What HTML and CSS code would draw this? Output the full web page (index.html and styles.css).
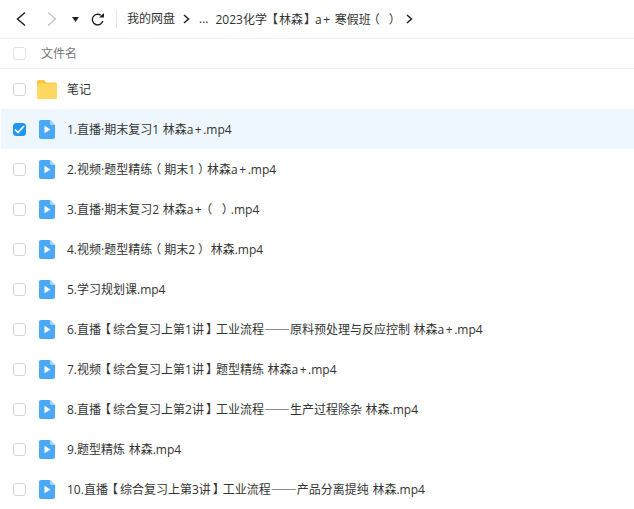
FILE: index.html
```html
<!DOCTYPE html>
<html lang="zh">
<head>
<meta charset="utf-8">
<title>文件</title>
<link rel="stylesheet" href="styles.css">
</head>
<body>
<div class="page">
  <div class="toolbar">
    <svg class="nav back" width="10" height="16" viewBox="0 0 10 16"><path d="M9 1.500 1.500 8 9 14.500" fill="none" stroke="#222" stroke-width="1.500"/></svg>
    <svg class="nav fwd" width="10" height="16" viewBox="0 0 10 16"><path d="M1 1.500 8.500 8 1 14.500" fill="none" stroke="#c4c4c4" stroke-width="1.300"/></svg>
    <svg class="nav drop" width="7" height="5" viewBox="0 0 7 5"><path d="M0 0h7L3.500 5z" fill="#222"/></svg>
    <svg class="nav reload" width="13" height="13" viewBox="0 0 13 13"><path d="M11.800 8A5.300 5.300 0 1 1 9.800 2.300" fill="none" stroke="#222" stroke-width="1.400"/><path d="M8 4.500h5V0z" fill="#222"/></svg>
    <span class="divider"></span>
    <span class="crumb">我的网盘</span>
    <svg class="sep" width="7" height="10" viewBox="0 0 7 10"><path d="M1 1l4.500 4L1 9" fill="none" stroke="#222" stroke-width="1.500"/></svg>
    <span class="crumb dots">...</span>
    <span class="crumb">2023化学<span class="ob">【</span>林森<span class="cb">】</span>a<span class="plus">+</span> 寒假班<span class="ol">（</span> <span class="cl">）</span></span>
    <svg class="sep last" width="7" height="10" viewBox="0 0 7 10"><path d="M1 1l4.500 4L1 9" fill="none" stroke="#222" stroke-width="1.500"/></svg>
  </div>
  <div class="row head">
    <span class="check soft"></span>
    <span class="head-name">文件名</span>
  </div>
  <div class="row folder">
    <span class="check"></span>
    <svg class="icon" width="20" height="19" viewBox="0 0 20 19"><path d="M0 2a2 2 0 0 1 2-2h5l2.500 2.500H18a2 2 0 0 1 2 2V17a2 2 0 0 1-2 2H2a2 2 0 0 1-2-2z" fill="#fdc33c"/><path d="M0 5a1.500 1.500 0 0 1 1.500-1.500h17A1.500 1.500 0 0 1 20 5v12a2 2 0 0 1-2 2H2a2 2 0 0 1-2-2z" fill="#ffd95f"/></svg>
    <span class="name">笔记</span>
  </div>
  <div class="row file selected">
    <span class="check on"><svg width="11" height="9" viewBox="0 0 11 9"><path d="M1 4.500l3 3L10 1" fill="none" stroke="#fff" stroke-width="1.700"/></svg></span>
    <svg class="icon" width="16" height="19" viewBox="0 0 16 19"><path class="v-bg" d="M2 0h9l5 5v12a2 2 0 0 1-2 2H2a2 2 0 0 1-2-2V2a2 2 0 0 1 2-2z"/><path class="v-fold" d="M11 0l5 5h-3.500A1.500 1.500 0 0 1 11 3.500z"/><path class="v-fg" d="M5.500 5.800v7.400l6-3.700z"/></svg>
    <span class="name">1.直播·期末复习1 林森a<span class="plus">+</span>.mp4</span>
  </div>
  <div class="row file">
    <span class="check"></span>
    <svg class="icon" width="16" height="19" viewBox="0 0 16 19"><path class="v-bg" d="M2 0h9l5 5v12a2 2 0 0 1-2 2H2a2 2 0 0 1-2-2V2a2 2 0 0 1 2-2z"/><path class="v-fold" d="M11 0l5 5h-3.500A1.500 1.500 0 0 1 11 3.500z"/><path class="v-fg" d="M5.500 5.800v7.400l6-3.700z"/></svg>
    <span class="name">2.视频·题型精练<span class="ol">（</span>期末1<span class="cl">）</span>林森a<span class="plus">+</span>.mp4</span>
  </div>
  <div class="row file">
    <span class="check"></span>
    <svg class="icon" width="16" height="19" viewBox="0 0 16 19"><path class="v-bg" d="M2 0h9l5 5v12a2 2 0 0 1-2 2H2a2 2 0 0 1-2-2V2a2 2 0 0 1 2-2z"/><path class="v-fold" d="M11 0l5 5h-3.500A1.500 1.500 0 0 1 11 3.500z"/><path class="v-fg" d="M5.500 5.800v7.400l6-3.700z"/></svg>
    <span class="name">3.直播·期末复习2 林森a<span class="plus">+</span><span class="ol">（</span> <span class="cl">）</span>.mp4</span>
  </div>
  <div class="row file">
    <span class="check"></span>
    <svg class="icon" width="16" height="19" viewBox="0 0 16 19"><path class="v-bg" d="M2 0h9l5 5v12a2 2 0 0 1-2 2H2a2 2 0 0 1-2-2V2a2 2 0 0 1 2-2z"/><path class="v-fold" d="M11 0l5 5h-3.500A1.500 1.500 0 0 1 11 3.500z"/><path class="v-fg" d="M5.500 5.800v7.400l6-3.700z"/></svg>
    <span class="name">4.视频·题型精练<span class="ol">（</span>期末2<span class="cl">）</span> 林森.mp4</span>
  </div>
  <div class="row file">
    <span class="check"></span>
    <svg class="icon" width="16" height="19" viewBox="0 0 16 19"><path class="v-bg" d="M2 0h9l5 5v12a2 2 0 0 1-2 2H2a2 2 0 0 1-2-2V2a2 2 0 0 1 2-2z"/><path class="v-fold" d="M11 0l5 5h-3.500A1.500 1.500 0 0 1 11 3.500z"/><path class="v-fg" d="M5.500 5.800v7.400l6-3.700z"/></svg>
    <span class="name">5.学习规划课.mp4</span>
  </div>
  <div class="row file">
    <span class="check"></span>
    <svg class="icon" width="16" height="19" viewBox="0 0 16 19"><path class="v-bg" d="M2 0h9l5 5v12a2 2 0 0 1-2 2H2a2 2 0 0 1-2-2V2a2 2 0 0 1 2-2z"/><path class="v-fold" d="M11 0l5 5h-3.500A1.500 1.500 0 0 1 11 3.500z"/><path class="v-fg" d="M5.500 5.800v7.400l6-3.700z"/></svg>
    <span class="name">6.直播<span class="ob">【</span>综合复习上第1讲<span class="cb">】</span>工业流程<span class="dash">——</span>原料预处理与反应控制 林森a<span class="plus">+</span>.mp4</span>
  </div>
  <div class="row file">
    <span class="check"></span>
    <svg class="icon" width="16" height="19" viewBox="0 0 16 19"><path class="v-bg" d="M2 0h9l5 5v12a2 2 0 0 1-2 2H2a2 2 0 0 1-2-2V2a2 2 0 0 1 2-2z"/><path class="v-fold" d="M11 0l5 5h-3.500A1.500 1.500 0 0 1 11 3.500z"/><path class="v-fg" d="M5.500 5.800v7.400l6-3.700z"/></svg>
    <span class="name">7.视频<span class="ob">【</span>综合复习上第1讲<span class="cb">】</span>题型精练 林森a<span class="plus">+</span>.mp4</span>
  </div>
  <div class="row file">
    <span class="check"></span>
    <svg class="icon" width="16" height="19" viewBox="0 0 16 19"><path class="v-bg" d="M2 0h9l5 5v12a2 2 0 0 1-2 2H2a2 2 0 0 1-2-2V2a2 2 0 0 1 2-2z"/><path class="v-fold" d="M11 0l5 5h-3.500A1.500 1.500 0 0 1 11 3.500z"/><path class="v-fg" d="M5.500 5.800v7.400l6-3.700z"/></svg>
    <span class="name">8.直播<span class="ob">【</span>综合复习上第2讲<span class="cb">】</span>工业流程<span class="dash">——</span>生产过程除杂 林森.mp4</span>
  </div>
  <div class="row file">
    <span class="check"></span>
    <svg class="icon" width="16" height="19" viewBox="0 0 16 19"><path class="v-bg" d="M2 0h9l5 5v12a2 2 0 0 1-2 2H2a2 2 0 0 1-2-2V2a2 2 0 0 1 2-2z"/><path class="v-fold" d="M11 0l5 5h-3.500A1.500 1.500 0 0 1 11 3.500z"/><path class="v-fg" d="M5.500 5.800v7.400l6-3.700z"/></svg>
    <span class="name">9.题型精炼 林森.mp4</span>
  </div>
  <div class="row file">
    <span class="check"></span>
    <svg class="icon" width="16" height="19" viewBox="0 0 16 19"><path class="v-bg" d="M2 0h9l5 5v12a2 2 0 0 1-2 2H2a2 2 0 0 1-2-2V2a2 2 0 0 1 2-2z"/><path class="v-fold" d="M11 0l5 5h-3.500A1.500 1.500 0 0 1 11 3.500z"/><path class="v-fg" d="M5.500 5.800v7.400l6-3.700z"/></svg>
    <span class="name">10.直播<span class="ob">【</span>综合复习上第3讲<span class="cb">】</span>工业流程<span class="dash">——</span>产品分离提纯 林森.mp4</span>
  </div>
</div>
</body>
</html>
```
FILE: styles.css
```css
* { box-sizing: border-box; }
html, body { margin: 0; padding: 0; background: #fff; overflow: hidden; }
.page {
  width: 634px;
  height: 509px;
  overflow: hidden;
  font-family: "Open Sans", "Noto Sans CJK SC", sans-serif;
  font-size: 12px;
  line-height: 16px;
  color: #333;
}
.ol, .cl, .ob, .cb {
  font-family: "Noto Sans CJK SC", sans-serif;
  font-feature-settings: "halt";
}
.ol, .cl { margin: 0 3px; }
.ob { margin: 0 2px 0 4px; }
.cb { margin: 0 4px 0 2px; }
.crumb .ob { margin: 0 1px 0 5px; }
.crumb .cb { margin: 0 5px 0 1px; }
.plus { padding: 0 1.500px; }
.dash { font-family: "Noto Sans CJK SC", sans-serif; font-size: 13px; }
.toolbar {
  display: flex;
  align-items: center;
  height: 39px;
  border-bottom: 1px solid #eeeff1;
}
.back { margin-left: 16px; }
.fwd { margin-left: 21px; }
.drop { margin-left: 15px; }
.reload { margin-left: 12px; }
.divider { width: 1px; height: 18px; background: #e6e6e6; margin: 0 10px 0 12px; }
.crumb { white-space: nowrap; color: #333; }
.sep { margin: 0 9px 0 8px; }
.sep.last { margin-left: 8px; }
.dots { margin-right: 7px; }
.row { display: flex; align-items: center; padding-left: 13px; }
.head { height: 30px; border-bottom: 1px solid #f0f1f3; }
.head-name { margin-left: 15px; color: #777; }
.folder { height: 40px; }
.file { height: 40px; }
.selected { background: #eef7fe; margin-left: 1px; padding-left: 12px; }
.check {
  flex: none;
  width: 13px;
  height: 13px;
  border: 1px solid #d4d6d9;
  border-radius: 3px;
  background: #fff;
  display: flex;
  align-items: center;
  justify-content: center;
}
.check.soft { border-color: #dfe1e4; }
.check.on { background: #2196f3; border-color: #2196f3; }
.check.on svg { flex: none; }
.icon { flex: none; margin-left: 13px; }
.folder .icon { margin-left: 11px; }
.file .name { margin-left: 12px; }
.folder .name { margin-left: 10px; }
.name { white-space: nowrap; color: #333; word-spacing: 0.5px; padding-top: 1px; }
.v-bg { fill: #4aa8f8; }
.v-fold { fill: #a9d6fc; }
.v-fg { fill: #fff; }
```
